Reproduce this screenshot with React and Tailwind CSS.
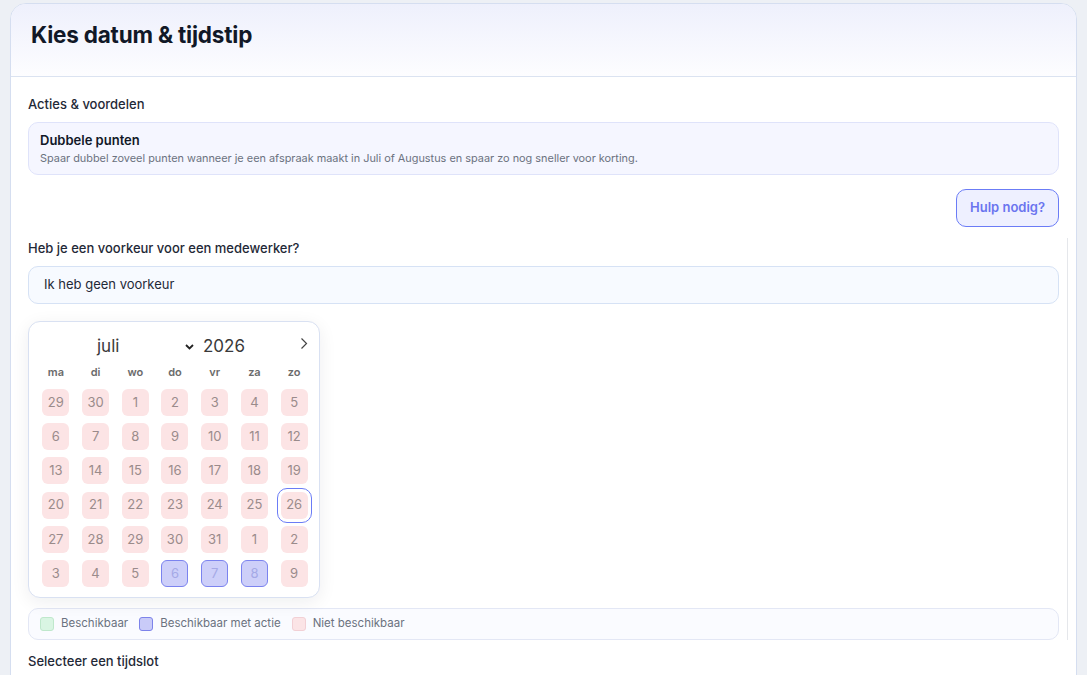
import React from "react";

const weekdays = ["ma", "di", "wo", "do", "vr", "za", "zo"];

// six weeks shown for juli 2026, starting at monday 29 juni
const days = [
  29, 30, 1, 2, 3, 4, 5,
  6, 7, 8, 9, 10, 11, 12,
  13, 14, 15, 16, 17, 18, 19,
  20, 21, 22, 23, 24, 25, 26,
  27, 28, 29, 30, 31, 1, 2,
  3, 4, 5, 6, 7, 8, 9,
];

function DayCell({ day, index }) {
  const isAction = index >= 38 && index <= 40;
  const isSelected = index === 27;

  if (isAction) {
    return (
      <div className="flex justify-center">
        <div className="w-[27px] h-[27px] rounded-[6px] bg-[#cdcff9] border border-[#7b83ef] text-[#a5a9e6] text-[13px] flex items-center justify-center">
          {day}
        </div>
      </div>
    );
  }

  return (
    <div className="flex justify-center">
      <div
        className={
          isSelected
            ? "w-[27px] h-[27px] rounded-[6px] bg-[#fce4e5] text-[#9a8b8b] text-[13px] flex items-center justify-center outline outline-1 outline-[#6b7cf6] outline-offset-[3px]"
            : "w-[27px] h-[27px] rounded-[6px] bg-[#fce4e5] text-[#9a8b8b] text-[13px] flex items-center justify-center"
        }
      >
        {day}
      </div>
    </div>
  );
}

export default function App() {
  return (
    <div
      className="min-h-screen bg-[#edf0f5] px-[10px] pt-[3px]"
      style={{ fontFamily: "Inter, 'Noto Sans', sans-serif" }}
    >
      <div className="bg-white border border-[#d5def0] rounded-t-[16px] overflow-hidden">
        {/* Header */}
        <div className="h-[73px] border-b border-[#dbe3f1] bg-gradient-to-b from-[#eef0fc] to-[#fdfdff] px-[20px] pb-[11px] flex items-center">
          <h1 className="text-[22.5px] font-bold text-[#111827] tracking-[-0.2px]">
            Kies datum &amp; tijdstip
          </h1>
        </div>

        <div className="px-[17px] pt-[19px] pb-[20px]">
          <div className="text-[13px] font-medium text-[#1f2937] leading-[16px]">
            Acties &amp; voordelen
          </div>

          <div className="mt-[10px] h-[53px] rounded-[10px] bg-[#f5f6ff] border border-[#dfe3fa] px-[11px] flex flex-col justify-center">
            <div className="text-[13px] font-semibold text-[#111827] leading-[16px]">
              Dubbele punten
            </div>
            <div className="text-[10.9px] text-[#6b7280] leading-[14px] mt-[3px]">
              Spaar dubbel zoveel punten wanneer je een afspraak maakt in Juli of Augustus en spaar zo nog sneller voor korting.
            </div>
          </div>

          <div className="mt-[14px] flex justify-end">
            <button className="w-[103px] h-[38px] rounded-[10px] border border-[#6b7cf6] bg-[#eef0ff] text-[#6a75ef] text-[13px] font-semibold">
              Hulp nodig?
            </button>
          </div>

          <div className="-mr-[9px] pr-[8px] border-r border-[#e5e7eb] mt-[11px] pt-[2px]">
            <div className="text-[13px] font-medium text-[#1f2937] leading-[16px]">
              Heb je een voorkeur voor een medewerker?
            </div>

            <div className="mt-[10px] h-[38px] rounded-[10px] bg-[#f7faff] border border-[#d6e2f5] px-[15px] flex items-center text-[13px] text-[#1f2937]">
              Ik heb geen voorkeur
            </div>

            {/* Calendar */}
            <div className="mt-[17px] w-[292px] h-[277px] bg-white border border-[#d9e1f2] rounded-[12px] shadow-[0_4px_18px_rgba(15,23,42,0.07)] pl-[7px] pr-[5px] pt-[14px] relative">
              <div className="h-[22px] flex items-center text-[17px] text-[#3a3a3a] font-normal">
                <span className="ml-[61px] w-[88px]">juli</span>
                <svg width="9" height="6" viewBox="0 0 9 6" className="text-[#222]">
                  <path d="M1 1l3.5 3.5L8 1" fill="none" stroke="currentColor" strokeWidth="1.8" />
                </svg>
                <span className="ml-[9px]">2026</span>
              </div>
              <svg
                width="8"
                height="13"
                viewBox="0 0 8 13"
                className="absolute right-[11px] top-[15px] text-[#444]"
              >
                <path d="M1.5 1.5l5 5-5 5" fill="none" stroke="currentColor" strokeWidth="1.2" />
              </svg>

              <div className="grid grid-cols-7 mt-[7px]">
                {weekdays.map((w) => (
                  <div key={w} className="text-center text-[11px] font-semibold text-[#6b6b6b] leading-[14px]">
                    {w}
                  </div>
                ))}
              </div>

              <div className="grid grid-cols-7 auto-rows-[34.2px] mt-[10px]">
                {days.map((d, i) => (
                  <DayCell key={i} day={d} index={i} />
                ))}
              </div>
            </div>

            {/* Legend */}
            <div className="mt-[10px] h-[32px] rounded-[10px] bg-[#fafbff] border border-[#e3e7f5] px-[11px] flex items-center text-[11.5px] text-[#6b7280]">
              <span className="w-[14px] h-[14px] rounded-[3px] bg-[#d9f5e3] border border-[#bfe8cc]" />
              <span className="ml-[7px]">Beschikbaar</span>
              <span className="ml-[11px] w-[14px] h-[14px] rounded-[3px] bg-[#c9cbf8] border border-[#7d83ea]" />
              <span className="ml-[7px]">Beschikbaar met actie</span>
              <span className="ml-[11px] w-[14px] h-[14px] rounded-[3px] bg-[#fbe4e6] border border-[#f2d0d5]" />
              <span className="ml-[7px]">Niet beschikbaar</span>
            </div>
          </div>

          <div className="mt-[13px] text-[13px] font-medium text-[#1f2937] leading-[16px]">
            Selecteer een tijdslot
          </div>
        </div>
      </div>
    </div>
  );
}
